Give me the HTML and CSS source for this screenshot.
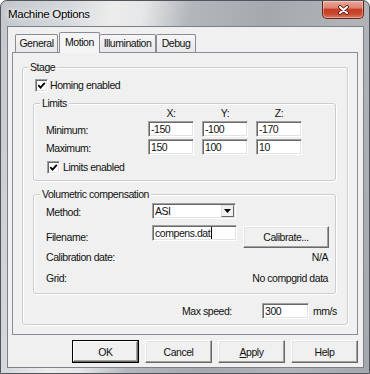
FILE: index.html
```html
<!DOCTYPE html>
<html>
<head>
    <meta charset="utf-8">
    <title>Machine Options</title>
    <link rel="stylesheet" href="styles.css">
</head>
<body>
<div class="window">
    <div class="titlebar">
        <span class="title">Machine Options</span>
        <span class="close">
            <svg width="11" height="10" viewBox="0 0 11 10">
                <path d="M2 2 L9 8 M9 2 L2 8" stroke="#4a1a12" stroke-width="3.6" stroke-linecap="round" fill="none"/>
                <path d="M2 2 L9 8 M9 2 L2 8" stroke="#ffffff" stroke-width="2" stroke-linecap="round" fill="none"/>
            </svg>
        </span>
    </div>

    <div class="client">
        <div class="tabs">
            <div class="tab tab-general">General</div>
            <div class="tab tab-motion active">Motion</div>
            <div class="tab tab-illum">Illumination</div>
            <div class="tab tab-debug">Debug</div>
        </div>

        <div class="panel">
            <div class="group stage">
                <div class="group-head"><span class="group-title">Stage</span></div>

                <div class="check homing">
                    <span class="box"><svg width="9" height="9" viewBox="0 0 9 9"><path d="M1.3 4.2 L3.5 6.6 L7.8 1.8" stroke="#000" stroke-width="1.8" fill="none"/></svg></span>
                    <span>Homing enabled</span>
                </div>

                <div class="group limits">
                    <div class="group-head">
                        <span class="group-title">Limits</span>
                        <div class="axes"><span>X:</span><span>Y:</span><span>Z:</span></div>
                    </div>
                    <div class="row limit-row first">
                        <span class="label">Minimum:</span>
                        <span class="edit num">-150</span>
                        <span class="edit num">-100</span>
                        <span class="edit num">-170</span>
                    </div>
                    <div class="row limit-row">
                        <span class="label">Maximum:</span>
                        <span class="edit num">150</span>
                        <span class="edit num">100</span>
                        <span class="edit num">10</span>
                    </div>
                    <div class="check limits-check">
                        <span class="box"><svg width="9" height="9" viewBox="0 0 9 9"><path d="M1.3 4.2 L3.5 6.6 L7.8 1.8" stroke="#000" stroke-width="1.8" fill="none"/></svg></span>
                        <span>Limits enabled</span>
                    </div>
                </div>

                <div class="group volumetric">
                    <div class="group-head"><span class="group-title">Volumetric compensation</span></div>
                    <div class="row method-row">
                        <span class="label">Method:</span>
                        <span class="combo">
                            <span class="combo-value">ASI</span>
                            <span class="combo-btn"><svg width="7" height="4" viewBox="0 0 7 4"><path d="M0 0 H7 L3.5 4 Z" fill="#000"/></svg></span>
                        </span>
                    </div>
                    <div class="row file-row">
                        <span class="label">Filename:</span>
                        <span class="edit file">compens.dat<span class="caret"></span></span>
                        <span class="button calibrate">Calibrate...</span>
                    </div>
                    <div class="info-row calib">
                        <span>Calibration date:</span>
                        <span>N/A</span>
                    </div>
                    <div class="info-row grid">
                        <span>Grid:</span>
                        <span>No compgrid data</span>
                    </div>
                </div>

                <div class="row speed-row">
                    <span class="label">Max speed:</span>
                    <span class="edit speed">300</span>
                    <span class="unit">mm/s</span>
                </div>
            </div>
        </div>

        <div class="buttons">
            <span class="button default">OK</span>
            <span class="button">Cancel</span>
            <span class="button"><u>A</u>pply</span>
            <span class="button">Help</span>
        </div>
    </div>
</div>
</body>
</html>
```

FILE: styles.css
```css
*{box-sizing: border-box;}
html,body{margin:0;padding:0;}
body{
    background:#fff;
    font-family: "Liberation Sans", Arial, sans-serif;
    font-size: 10.5px; letter-spacing: -0.45px;
    color:#111;
}

/* window frame (aero glass look) */
.window{
    width:370px; height:374px;
    border:1px solid #50565c; border-radius:7px 7px 0 0;
    padding:0 5px 5px 6px;
    background: linear-gradient(100deg, #c3c7cb 0%, #d6d9dc 16%, #ececec 26%, #e6e7e8 33%, #b3b7bb 44%, #a4a9ad 62%, #b1b5b9 82%, #a3a8ac 100%);
}
.titlebar{
    height:25px;
    display:flex; justify-content:space-between; align-items:flex-start;
}
.title{
    margin:7px 0 0 1px; line-height:13px;
    font-size:11.5px; letter-spacing:-0.3px; color:#000;
    text-shadow:0 0 6px #fff, 0 0 3px #fff;
}
.close{
    width:42px; height:18px;
    display:flex; align-items:center; justify-content:center;
    border:1px solid #6a2418; border-top:none; border-radius:0 0 5px 5px;
    background: linear-gradient(#eba89a 0%, #de8370 40%, #c63f28 50%, #c8452d 75%, #df7a60 100%);
    box-shadow: inset 0 0 0 1px rgba(255,255,255,0.35);
}

/* client area */
.client{
    width:357px; height:342px;
    border:1px solid #7b8086;
    background:#f0f0f0;
}

/* tabs */
.tabs{
    display:flex; align-items:flex-end;
    height:20px; margin:5px 0 0 4px;
}
.tab{
    height:18px; line-height:16px; text-align:center;
    border:1px solid #898c95; border-bottom:none;
    background: linear-gradient(#f6f6f6, #e8e8e8);
    border-radius:2px 2px 0 0;
}
.tab-general{ width:43px; margin-left:3px; }
.tab-motion{ width:41px; margin-left:1px; }
.tab-illum{ width:56px; border-left:none; }
.tab-debug{ width:40px; }
.tab.active{
    height:21px; margin-bottom:-1px; line-height:19px;
    background:#f4f4f4;
    position:relative; z-index:1;
}

.panel{
    width:346px; height:283px; margin-left:4px;
    border:1px solid #898c95;
    padding:14px 0 0 9px;
    background:#f0f0f0;
}

/* group boxes */
.group{
    border:1px solid #c9ced2; border-radius:3px;
    box-shadow: inset 1px 1px 0 #fff, 1px 1px 0 #fff;
}
.group-head{ display:flex; align-items:flex-start; margin-top:-7px; }
.group-title{ line-height:13px; padding:0 2px; margin-left:6px; background:#f0f0f0; }

.stage{ width:326px; padding-bottom:5px; }
.stage > .group-head .group-title{ margin-left:5px; }
.limits{ width:303px; margin:11px 0 0 10px; padding-bottom:6px; }
.volumetric{ width:303px; margin:13px 0 0 10px; padding-bottom:8px; }

.axes{ display:flex; gap:8px; margin:10px 33px 0 auto; line-height:13px; }
.axes span{ width:46px; text-align:center; }

/* checkboxes */
.check{ display:flex; align-items:center; height:13px; line-height:13px; }
.box{
    width:13px; height:13px; margin-right:2px;
    display:flex; align-items:center; justify-content:center;
    background:#fff;
    border:1px solid; border-color:#a0a0a0 #fff #fff #a0a0a0;
    box-shadow: inset 1px 1px 0 #696969, inset -1px -1px 0 #e3e3e3;
}
.homing{ margin:5px 0 0 12px; }
.limits-check{ margin:6px 0 0 13px; }
.limits-check .box{ margin-right:3px; }

/* form rows */
.row{ display:flex; align-items:center; }
.label{ flex:none; line-height:13px; }
.edit{
    display:block; height:16px; line-height:15px;
    padding:0 2px; white-space:nowrap; overflow:hidden;
    background:#fff;
    border:1px solid; border-color:#a0a0a0 #fff #fff #a0a0a0;
    box-shadow: inset 1px 1px 0 #696969, inset -1px -1px 0 #e3e3e3;
}
.limit-row{ padding-left:12px; margin-top:2px; }
.limit-row.first{ margin-top:1px; }
.limit-row .label{ width:102px; padding-top:2px; }
.limit-row .num{ width:46px; margin-right:8px; }

.method-row{ padding-left:12px; margin-top:1px; }
.method-row .label{ width:106px; padding-top:4px; }
.combo{
    width:84px; height:16px;
    display:flex; align-items:center; justify-content:space-between;
    background:#fff; padding:0 1px 0 2px;
    border:1px solid; border-color:#a0a0a0 #fff #fff #a0a0a0;
    box-shadow: inset 1px 1px 0 #696969, inset -1px -1px 0 #e3e3e3;
}
.combo-value{ line-height:13px; padding-top:1px; }
.combo-btn{
    width:13px; height:12px;
    display:flex; align-items:center; justify-content:center;
    background:#f0f0f0;
    border:1px solid; border-color:#e3e3e3 #696969 #696969 #e3e3e3;
}

.file-row{ padding-left:12px; margin-top:6px; align-items:flex-start; height:23px; }
.file-row .label{ width:106px; padding-top:6px; }
.file{ width:85px; display:flex; align-items:center; }
.caret{ width:1px; height:12px; background:#000; margin-left:1px; }

.button{
    display:flex; align-items:center; justify-content:center;
    background:#f0f0f0;
    border:1px solid; border-color:#fff #696969 #696969 #fff;
    box-shadow: inset -1px -1px 0 #a0a0a0, inset 1px 1px 0 #e3e3e3;
}
.calibrate{ width:86px; height:22px; margin:1px 0 0 6px; }

.info-row{
    display:flex; justify-content:space-between;
    line-height:13px; padding:0 7px 0 12px;
}
.calib{ margin-top:3px; }
.grid{ margin-top:8px; }

.speed-row{ padding-left:159px; margin-top:9px; }
.speed-row .label{ width:80px; }
.speed{ width:47px; }
.unit{ margin-left:4px; }

/* dialog buttons */
.buttons{
    display:flex; justify-content:flex-end; gap:6px;
    margin-top:5px; padding-right:5px;
}
.buttons .button{ width:67px; height:23px; }
.buttons .default{
    border:1px solid #000;
    box-shadow: inset -1px -1px 0 #696969, inset 1px 1px 0 #fff, inset -2px -2px 0 #a0a0a0;
}
```
